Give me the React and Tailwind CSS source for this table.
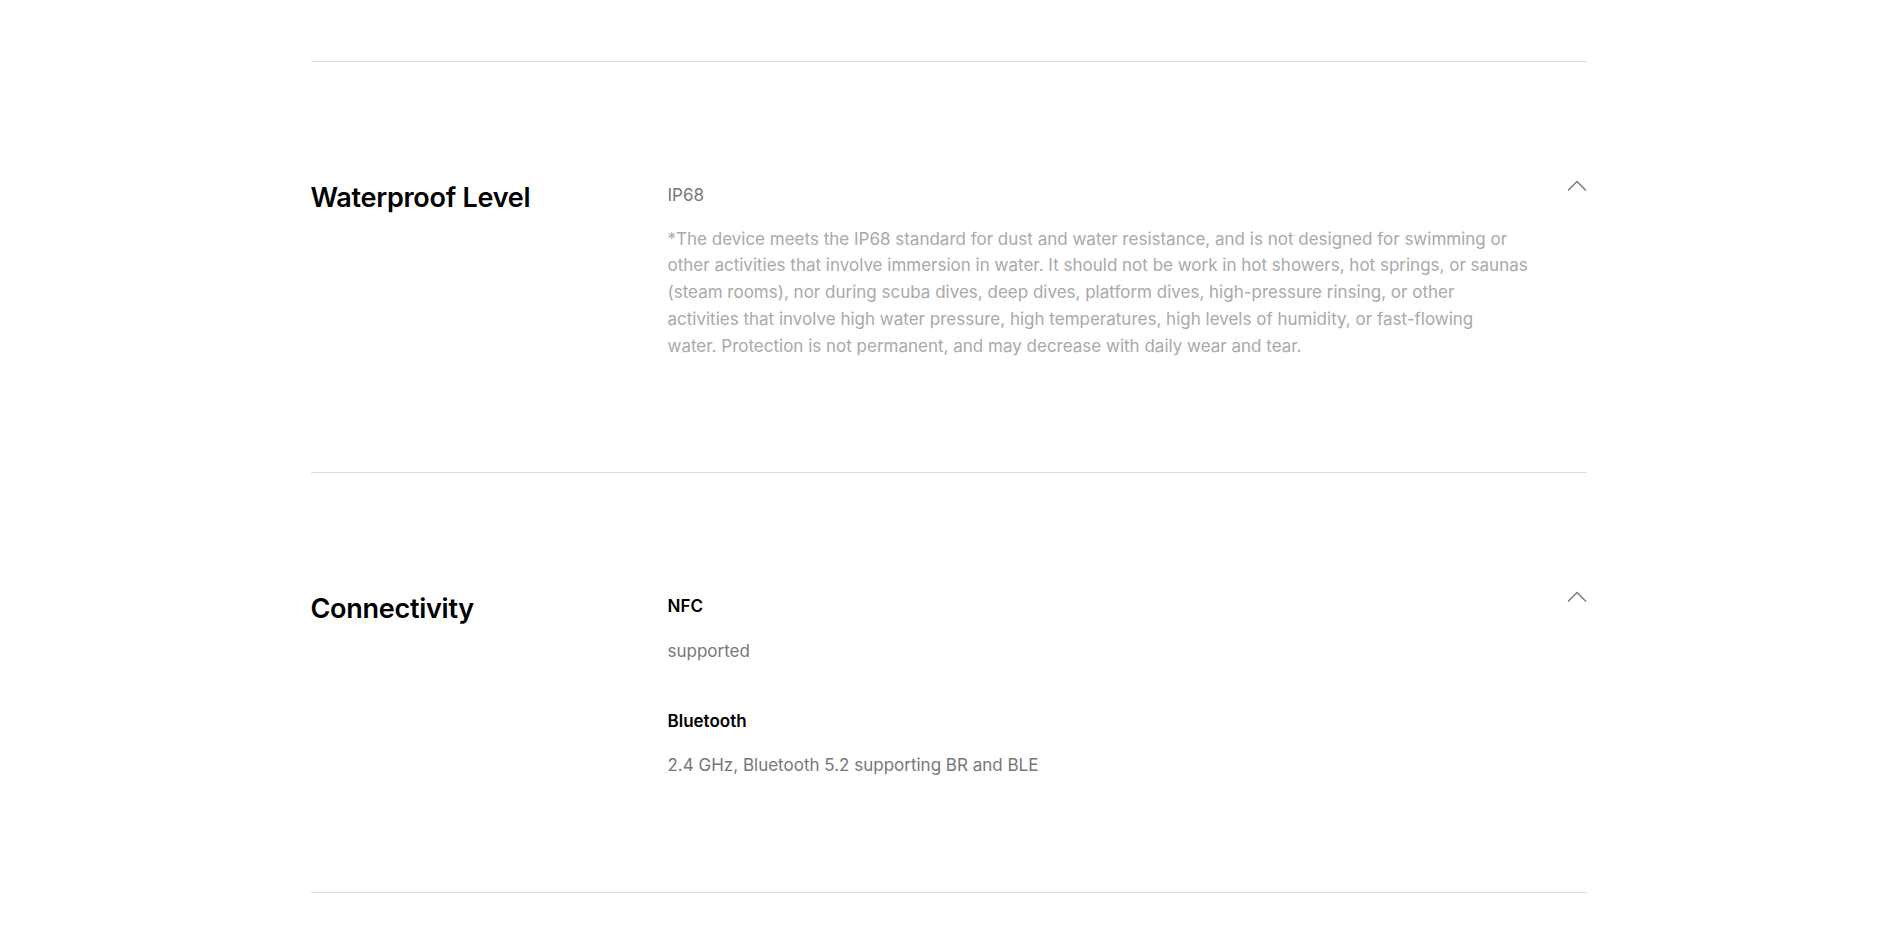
import React from 'react';

const Chevron = () => (
    <svg width="20" height="12" viewBox="0 0 20 12" fill="none" className="shrink-0 -mt-[2px]">
        <polyline points="1,10.5 10,1.5 19,10.5" stroke="#7a7a7a" strokeWidth="1.5" />
    </svg>
);

const SpecRow = ({ title, children, className = '' }) => (
    <div className={`border-t border-[#dcdcdc] pt-[120px] flex items-start ${className}`}>
        <h2 className="w-[357px] shrink-0 text-[27px] leading-[31px] tracking-[-0.01em] font-semibold text-black">{title}</h2>
        <div className="flex-1 min-w-0">{children}</div>
        <Chevron />
    </div>
);

export default function App() {
    return (
        <div className="min-h-[928px] bg-white pt-[61px]" style={{ fontFamily: 'Inter, "Noto Sans", sans-serif' }}>
            <div className="max-w-[1276px] mx-auto">
                <SpecRow title="Waterproof Level" className="pb-[113px]">
                    <p className="text-[17px] leading-[26.7px] text-[#777777]">IP68</p>
                    <p className="mt-[17px] max-w-[890px] text-[17px] leading-[26.7px] text-[#a9a9a9]">
                        *The device meets the IP68 standard for dust and water resistance, and is not designed for swimming or<br />
                        other activities that involve immersion in water. It should not be work in hot showers, hot springs, or saunas<br />
                        (steam rooms), nor during scuba dives, deep dives, platform dives, high-pressure rinsing, or other<br />
                        activities that involve high water pressure, high temperatures, high levels of humidity, or fast-flowing<br />
                        water. Protection is not permanent, and may decrease with daily wear and tear.
                    </p>
                </SpecRow>
                <SpecRow title="Connectivity" className="pb-[113px] border-b">
                    <div>
                        <p className="text-[17px] leading-[26.7px] font-semibold text-black">NFC</p>
                        <p className="mt-[18px] text-[17px] leading-[26.7px] text-[#777777]">supported</p>
                    </div>
                    <div className="mt-[43px]">
                        <p className="text-[17px] leading-[26.7px] font-semibold text-black">Bluetooth</p>
                        <p className="mt-[18px] text-[17px] leading-[26.7px] text-[#777777]">2.4 GHz, Bluetooth 5.2 supporting BR and BLE</p>
                    </div>
                </SpecRow>
            </div>
        </div>
    );
}
